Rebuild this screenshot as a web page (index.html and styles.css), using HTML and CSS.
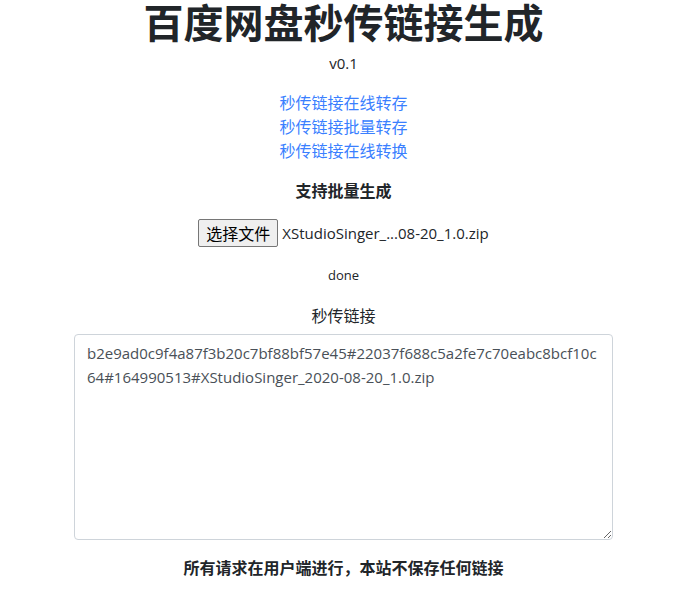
FILE: index.html
```html
<!DOCTYPE html>
<html lang="zh">
<head>
<meta charset="utf-8">
<title>百度网盘秒传链接生成</title>
<link rel="stylesheet" href="styles.css">
</head>
<body>
<main class="page">
  <h1 class="title">百度网盘秒传链接生成</h1>
  <p class="version">v0.1</p>
  <nav class="links">
    <a href="#">秒传链接在线转存</a>
    <a href="#">秒传链接批量转存</a>
    <a href="#">秒传链接在线转换</a>
  </nav>
  <p class="batch">支持批量生成</p>
  <div class="file-row">
    <button class="file-btn" type="button">选择文件</button>
    <span class="file-name">XStudioSinger_...08-20_1.0.zip</span>
  </div>
  <p class="status">done</p>
  <p class="label">秒传链接</p>
  <textarea class="output">b2e9ad0c9f4a87f3b20c7bf88bf57e45#22037f688c5a2fe7c70eabc8bcf10c64#164990513#XStudioSinger_2020-08-20_1.0.zip</textarea>
  <p class="footer">所有请求在用户端进行，本站不保存任何链接</p>
</main>
</body>
</html>
```
FILE: styles.css
```css
html, body {
  margin: 0;
  padding: 0;
  background: #fff;
}
body {
  padding-left: 4px;
  font-family: "Open Sans", "Noto Sans CJK SC", sans-serif;
  color: #212529;
  font-size: 16px;
  line-height: 1.5;
}
.page {
  width: 539px;
  margin: 0 auto;
  display: flex;
  flex-direction: column;
  align-items: center;
  text-align: center;
}
.title {
  margin: 0;
  font-size: 40px;
  line-height: 42px;
  font-weight: 700;
  font-family: "Noto Sans CJK SC", sans-serif;
  color: #212529;
}
.version {
  margin: 9px 0 0;
  font-size: 15px;
  line-height: 24px;
}
.links {
  margin-top: 15px;
  display: flex;
  flex-direction: column;
  align-items: center;
}
.links a {
  color: #3a7fff;
  text-decoration: none;
  font-family: "Noto Sans CJK SC", sans-serif;
  font-size: 16px;
  line-height: 24px;
}
.batch {
  margin: 16px 0 0;
  font-weight: 700;
  font-family: "Noto Sans CJK SC", sans-serif;
  line-height: 24px;
}
.file-row {
  margin-top: 17px;
  display: flex;
  align-items: center;
  gap: 4px;
}
.file-btn {
  width: 80px;
  height: 28px;
  padding: 0;
  background: #efefef;
  border: 1px solid #767676;
  border-radius: 2px;
  font-family: "Noto Sans CJK SC", sans-serif;
  font-size: 16px;
  color: #000;
  line-height: 1;
}
.file-name {
  font-size: 15px;
  color: #212529;
}
.status {
  margin: 18px 0 0;
  font-size: 13px;
  line-height: 20px;
}
.label {
  margin: 18px 0 0;
  font-family: "Noto Sans CJK SC", sans-serif;
  line-height: 24px;
}
.output {
  box-sizing: border-box;
  margin-top: 7px;
  width: 539px;
  height: 206px;
  padding: 6px 12px;
  border: 1px solid #ced4da;
  border-radius: 4px;
  font-family: "Open Sans", "Noto Sans CJK SC", sans-serif;
  font-size: 15px;
  line-height: 24px;
  color: #495057;
  resize: vertical;
  text-align: left;
  word-break: break-all;
}
.footer {
  margin: 15px 0 0;
  font-weight: 700;
  font-family: "Noto Sans CJK SC", sans-serif;
  line-height: 24px;
}
```
